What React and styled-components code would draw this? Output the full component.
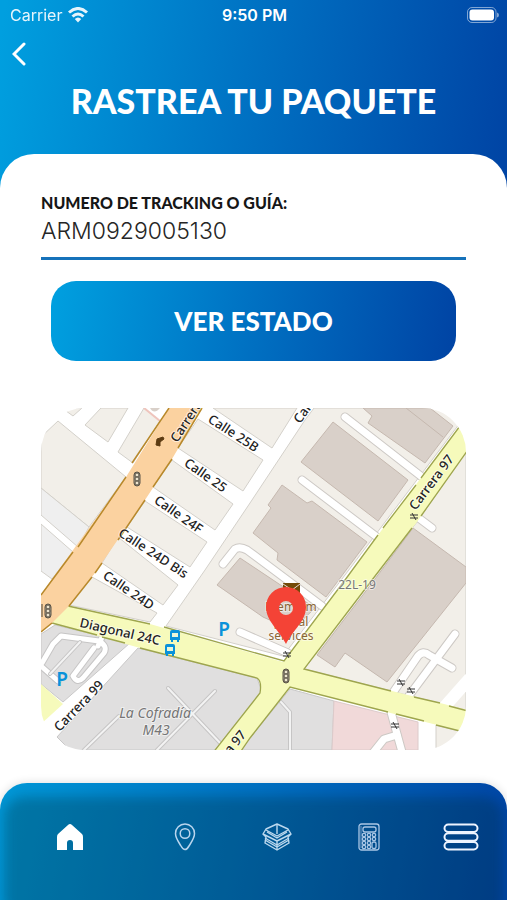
import React, { useState } from "react";
import styled, { createGlobalStyle } from "styled-components";

const GlobalStyle = createGlobalStyle`
  * { box-sizing: border-box; }
  body { margin: 0; background: #fff; font-family: Inter, "Liberation Sans", sans-serif; }
`;

const blueFade = "linear-gradient(98deg, #009fdf 1%, #0072c3 48%, #0045a5 98%)";
const displayFont = 'Lato, "Open Sans", sans-serif';

const Page = styled.div`
  min-height: 100vh;
  display: flex;
  flex-direction: column;
  background: #fff;
`;

const Header = styled.header`
  display: flex;
  flex-direction: column;
  height: 190px;
  background: ${blueFade};
  color: #fff;
`;

const StatusBar = styled.div`
  display: grid;
  grid-template-columns: 1fr auto 1fr;
  align-items: center;
  height: 30px;
  padding: 0 8px 0 10px;
  font-size: 16px;
  line-height: 20px;
`;

const Carrier = styled.div`
  display: flex;
  align-items: center;
  gap: 6px;
  opacity: 0.9;
`;

const Clock = styled.div`
  font-weight: 600;
`;

const BatteryIcon = styled.svg`
  justify-self: end;
`;

const BackButton = styled.button`
  display: flex;
  width: 32px;
  height: 48px;
  padding: 12px 0 0 12px;
  border: 0;
  background: none;
  color: inherit;
  cursor: pointer;
`;

const Title = styled.h1`
  margin: 0;
  text-align: center;
  font: 900 34px/46px ${displayFont};
`;

const Sheet = styled.main`
  flex: 1;
  margin-top: -36px;
  padding: 40px 41px 33px;
  border-radius: 34px 34px 0 0;
  background: #fff;
`;

const Form = styled.form`
  display: flex;
  flex-direction: column;
`;

const FieldLabel = styled.label`
  color: #161616;
  font: 900 16px/18px ${displayFont};
`;

const TrackingInput = styled.input`
  width: 100%;
  height: 48px;
  padding: 0 0 8px;
  border: 0;
  border-bottom: 3px solid #1672ba;
  border-radius: 0;
  background: none;
  color: #262626;
  font: 300 23px/28px Inter, sans-serif;
  outline: 0;
`;

const SubmitButton = styled.button`
  height: 80px;
  margin: 21px 10px 0;
  border: 0;
  border-radius: 25px;
  background: ${blueFade};
  color: #fff;
  font: 900 26px/36px ${displayFont};
  cursor: pointer;
`;

const MapCard = styled.section`
  margin-top: 47px;
  border-radius: 44px;
  overflow: hidden;
  aspect-ratio: 425 / 342;
`;

const MapDrawing = styled.svg`
  display: block;
  width: 100%;
  height: 100%;
  font-family: "Noto Sans", "Open Sans", sans-serif;
`;

const RoadLabel = styled.text`
  font-size: 13px;
  font-weight: 500;
  fill: #222;
  stroke: rgba(255, 255, 255, 0.6);
  stroke-width: 2px;
  paint-order: stroke;
  text-anchor: middle;
`;

const PlaceLabel = styled.text`
  font-size: ${(p) => (p.$large ? 14 : 12)}px;
  font-style: ${(p) => (p.$large ? "italic" : "normal")};
  fill: ${(p) => p.$color};
  stroke: rgba(255, 255, 255, 0.5);
  stroke-width: 2px;
  paint-order: stroke;
  text-anchor: middle;
`;

const ParkingLabel = styled.text`
  font-size: 19px;
  font-weight: 600;
  fill: #0a92da;
  text-anchor: middle;
`;

const NavBar = styled.nav`
  position: relative;
  display: grid;
  grid-template-columns: 139fr 92fr 92fr 92fr 92fr;
  align-items: start;
  height: 117px;
  padding-top: 34px;
  border-radius: 27px 27px 0 0;
  background: linear-gradient(100deg, #0096d6 2%, #006fc0 50%, #0045a5 98%);
  box-shadow: 0 0 10px rgba(0, 0, 0, 0.14);
  overflow: hidden;

  &::before {
    content: "";
    position: absolute;
    inset: 14px 4px -20px;
    border-radius: 20px;
    background: rgba(0, 40, 48, 0.29);
    filter: blur(6px);
  }
`;

const NavLink = styled.a`
  position: relative;
  display: grid;
  place-items: center;
  height: 40px;
  color: #fff;
`;

const paths = (shapes) => shapes.map((d) => <path key={d} d={d} />);

const landBlocks = [
  "M41 437 58 421 126 477 89 527 41 488Z",
  "M101 408 85 425 108 442 128 408Z",
  "M144 408 118 452 133 463 160 421Z",
  "M62 408 73 416 82 408Z",
  "M213 408 272 448 297 408Z",
  "M198 419 178 448 243 491 263 460Z",
  "M172 460 153 487 215 530 233 504Z",
  "M145 501 127 527 190 567 207 542Z",
  "M118 537 102 563 163 605 178 585Z",
  "M92 577 69 605 150 622 157 613Z",
  "M314 408 305 420 250 503 205 570 166 626 283 656 345 575 466 415 466 408Z",
  "M304 669 372 580 417 522 466 452 466 710Z",
  "M436 725 466 733 466 750 436 750Z",
];

const greyBlocks = [
  "M41 488 89 527 78 547 41 515Z",
  "M41 524 73 552 52 579 41 571Z",
];

const cityBlocks = [
  "M55 625 130 643 63 702 41 684 41 634Z",
  "M138 648 257 678 262 692 215 750 70 750 57 737Z",
  "M290 689 334 701 332 750 241 750 250 738Z",
];

const buildings = [
  "M333 422 408 480 378 521 301 462Z",
  "M282 485 307 503 312 501 367 542 326 597 277 560 278 553 253 533 271 508 268 505Z",
  "M240 558 217 585 263 617 292 630 315 608Z",
  "M363 408 372 416 368 423 425 463 453 426 430 408Z",
  "M413 528 466 567 466 583 387 682 345 653 335 667 317 655 372 583Z",
];

const lanes = [
  "M345 417 422 477",
  "M302 480 377 537",
  "M223 564 235 549 Q240 546 247 550 L322 606",
  "M240 632 288 653",
  "M416 516 432 528",
  "M455 634 408 697",
  "M392 694 418 656 Q423 650 429 655 L452 668",
  "M391 712 397 734 402 752",
  "M397 735 384 739 372 754",
];

const parkingLanes = [
  "M42 663 53 644 61 636 99 641 Q108 646 104 653 L83 678 Q77 684 73 676 L94 648",
  "M41 666 58 681",
  "M98 646 104 633",
];

const tracks = [
  "M50 674 80 642",
  "M168 688 223 746",
  "M215 691 157 750",
  "M119 716 84 750",
  "M281 702 290 712 290 750",
];

const barriers = [
  [414, 516],
  [287, 654],
  [401, 682],
  [411, 690],
  [395, 725],
];

const signals = [
  [137, 479],
  [48, 611],
  [286, 676],
];

const roadLabels = [
  ["Calle 25B", 231, 437, 33],
  ["Calle 25", 203, 479, 35],
  ["Calle 24F", 176, 518, 35],
  ["Calle 24D Bis", 151, 557, 33],
  ["Calle 24D", 126, 594, 34],
  ["Diagonal 24C", 119, 636, 13],
  ["Carrera 99", 82, 709, -46],
  ["Carrera 97", 435, 485, -53],
  ["Carrera 97", 226, 760, -50],
  ["Carrera 99", 195, 416, -57],
  ["Carrera 99", 319, 398, -54],
];

function TrafficSignal({ x, y }) {
  return (
    <g transform={`translate(${x} ${y})`} fill="none" stroke="#5a5346" strokeWidth="1">
      <rect x="-3" y="-7" width="6" height="14" rx="3" fill="#a9a18f" />
      <circle cy="-4" r="2" fill="#eee5cf" />
      <circle r="2" fill="#eee5cf" />
      <circle cy="4" r="2" fill="#eee5cf" />
    </g>
  );
}

function Bus({ x, y }) {
  return (
    <g transform={`translate(${x} ${y})`}>
      <path d="M-5 -4 Q-5 -6 -3 -6 H3 Q5 -6 5 -4 V4 H4 V6 H2 V4 H-2 V6 H-4 V4 H-5Z" fill="#0a92da" />
      <path d="M-3 -3 H3 V1 H-3Z" fill="#e9f6d9" />
    </g>
  );
}

function StreetMap() {
  return (
    <MapDrawing viewBox="41 408 425 342" preserveAspectRatio="xMidYMid slice" role="img" aria-label="Mapa">
      <rect x="41" y="408" width="425" height="342" fill="#fff" />
      <g fill="#f2efe9" stroke="#d3d0ca" strokeWidth="1">{paths(landBlocks)}</g>
      <g fill="#efefef" stroke="#d3d0ca" strokeWidth="1">{paths(greyBlocks)}</g>
      <g fill="#e0dfdf" stroke="#c9c8c8" strokeWidth="1">{paths(cityBlocks)}</g>
      <path d="M334 701 418 722 418 750 332 750Z" fill="#f1d9d9" stroke="#dccaca" />
      <path d="M41 684 63 704 41 724Z" fill="#f6fabb" />
      <path d="M144 408 160 421" stroke="#efc4bc" strokeWidth="2" />
      <path d="M150 408 Q154 415 160 408Z" fill="#d9d0c9" />
      <g fill="#d9d0c9" stroke="#c5b8af" strokeWidth="1">{paths(buildings)}</g>
      <path d="M406 408 443 437" stroke="#c5b8af" />
      <path d="M470 678 440 712" stroke="#fff" strokeWidth="12" />
      <g fill="none" strokeLinecap="round" strokeLinejoin="round">
        <g stroke="#cdc9c5" strokeWidth="9">{paths(lanes)}</g>
        <g stroke="#fff" strokeWidth="7">{paths(lanes)}</g>
        <g stroke="#c6c5c5" strokeWidth="7">{paths(parkingLanes)}</g>
        <g stroke="#fff" strokeWidth="5">{paths(parkingLanes)}</g>
        <g stroke="#c6c5c5" strokeWidth="4">{paths(tracks)}</g>
        <g stroke="#f3f3f3" strokeWidth="2">{paths(tracks)}</g>
      </g>
      <path
        d="M52 604 68 606 150 624 283 662 345 580 378 535 457 430 470 412 470 447 417 522 372 580 304 669 468 710 468 733 290 687 250 738 239 754 212 754 260 693 Q262 681 257 678 L140 648 52 623Z"
        fill="#f6fabb"
      />
      <g fill="none" stroke="#9ea54e" strokeWidth="1.3">
        <path d="M68 606 150 624 M164 627 284 661 345 580 378 535 M383 528 416 485 M421 478 457 430 470 412" />
        <path d="M470 447 421 516 M412 528 372 580 304 669 391 691 M414 697 440 703 M449 706 468 711" />
        <path d="M468 733 436 725 M424 721 396 714 M388 712 290 687 250 738 239 754 M212 754 260 693 Q262 681 257 678 L140 648 M125 643 102 637 M97 635 52 623" />
      </g>
      <path d="M169 408 126 477 52 579 41 595 41 632 52 623 69 606 95 573 145 500 172 459 202 408Z" fill="#fbd2a0" />
      <g fill="none" stroke="#b8892b" strokeWidth="1.5">
        <path d="M169 408 132 463 M126 477 78 547 M73 552 41 595 M41 632 52 623" />
        <path d="M202 408 178 448 M172 459 153 487 M145 500 118 540 M102 563 95 573 M92 577 69 606" />
      </g>
      <path d="M156 445 157 439 163 437 164 439 160 442 160 446Z" fill="#5c3b12" stroke="#5c3b12" />
      {roadLabels.map(([text, x, y, angle]) => (
        <RoadLabel key={`${text}-${x}`} transform={`translate(${x} ${y}) rotate(${angle})`}>{text}</RoadLabel>
      ))}
      {signals.map(([x, y]) => <TrafficSignal key={x} x={x} y={y} />)}
      <path d="M42 604V617" stroke="#4b4438" />
      <g stroke="#333" strokeWidth="1">
        {barriers.map(([x, y]) => (
          <path key={x} d={`M${x - 4} ${y - 1}h8M${x - 4} ${y + 2}h8M${x - 2} ${y - 3}l4 7`} />
        ))}
      </g>
      <Bus x={175} y={636} />
      <Bus x={170} y={650} />
      <ParkingLabel x="224" y="636">P</ParkingLabel>
      <ParkingLabel x="62" y="686">P</ParkingLabel>
      <PlaceLabel $large $color="#757575" x="155" y="718">La Cofradía</PlaceLabel>
      <PlaceLabel $large $color="#757575" x="156" y="735">M43</PlaceLabel>
      <PlaceLabel $color="#777" x="357" y="589">22L-19</PlaceLabel>
      <path d="M283 583H300V596H283Z" fill="#734a08" />
      <path d="M283 584 292 590 300 584" fill="none" stroke="#e6ddd5" />
      <PlaceLabel $color="#8a6536" x="291" y="611">Premium</PlaceLabel>
      <PlaceLabel $color="#8a6536" x="291" y="626">postal</PlaceLabel>
      <PlaceLabel $color="#8a6536" x="291" y="640">services</PlaceLabel>
      <path
        d="M286 644C279 630 266 621 266 607A20 20 0 0 1 306 607C306 621 293 630 286 644ZM286 601A7 7 0 1 0 286 615A7 7 0 1 0 286 601Z"
        fill="#f44336"
        fillRule="evenodd"
      />
    </MapDrawing>
  );
}

const HomeIcon = () => (
  <svg width="26" height="28" viewBox="0 0 26 28" fill="currentColor">
    <path d="M13 1Q14 1 15 2L25 11Q26 12 26 14V27H16V20Q16 17 13 17Q10 17 10 20V27H0V14Q0 12 1 11L11 2Q12 1 13 1Z" />
  </svg>
);

const PinIcon = () => (
  <svg width="22" height="28" viewBox="0 0 22 28" fill="none" stroke="#b8d5ee" strokeWidth="1.5">
    <path d="M11 26.5Q9 26.5 7 23C4 18 1.5 15 1.5 10.5A9.5 9.5 0 0 1 20.5 10.5C20.5 15 18 18 15 23Q13 26.5 11 26.5Z" />
    <circle cx="11" cy="10.5" r="4.8" />
  </svg>
);

const BoxIcon = () => (
  <svg width="30" height="28" viewBox="0 0 30 28" fill="none" stroke="#bbd8ee" strokeWidth="1.4" strokeLinejoin="round">
    <path d="M15 1 26 6 29 11 26 14 27 20 15 27 3 20 4 14 1 11 4 6Z" />
    <path d="M15 1V11M15 17V27M4 7 15 13 26 7M1 11 15 18 29 11M5 9 15 15 25 9M3 15 15 22 27 15M3 17 15 24 27 17" />
  </svg>
);

const CalculatorIcon = () => (
  <svg width="22" height="28" viewBox="0 0 22 28" fill="none" stroke="#a9c6e5" strokeWidth="1.3">
    <rect x="1" y="1" width="20" height="26" rx="2.5" />
    <path d="M3 3V25" strokeOpacity="0.5" />
    <rect x="5" y="4" width="13" height="5" rx="2" />
    {[12, 16, 20, 24].map((y) => [6, 11].map((x) => <circle key={`${x}-${y}`} cx={x} cy={y} r="1.7" />))}
    <circle cx="16" cy="12" r="1.7" />
    <circle cx="16" cy="16" r="1.7" />
    <rect x="14" y="19" width="4" height="6.5" rx="1.5" />
  </svg>
);

const MenuIcon = () => (
  <svg width="36" height="28" viewBox="0 0 36 28" fill="none" stroke="#eef4ff" strokeWidth="2">
    <rect x="1.5" y="1.5" width="33" height="7.5" rx="3.7" />
    <rect x="1.5" y="10.3" width="33" height="7.5" rx="3.7" />
    <rect x="1.5" y="19" width="33" height="7.5" rx="3.7" />
  </svg>
);

const navItems = [
  ["Inicio", HomeIcon],
  ["Rastreo", PinIcon],
  ["Paquetes", BoxIcon],
  ["Calculadora", CalculatorIcon],
  ["Menú", MenuIcon],
];

export default function App() {
  const [tracking, setTracking] = useState("ARM0929005130");
  return (
    <Page>
      <GlobalStyle />
      <Header>
        <StatusBar>
          <Carrier>
            Carrier
            <svg width="20" height="16" viewBox="0 0 20 16" fill="none" stroke="#fff" strokeWidth="3">
              <path d="M1 5.5Q10 -2.5 19 5.5M4.5 9.5Q10 4.500 15.5 9.5" />
              <path d="M6.800 12Q10 9 13.200 12L10 15.500Z" fill="#fff" stroke="none" />
            </svg>
          </Carrier>
          <Clock>9:50 PM</Clock>
          <BatteryIcon width="32" height="16" viewBox="0 0 32 16">
            <rect x="0.5" y="0.5" width="28.5" height="15" rx="4.5" fill="none" stroke="#fff" strokeOpacity="0.5" />
            <rect x="2.5" y="2.5" width="24.5" height="11" rx="3" fill="#fff" />
            <path d="M30 5.5Q32 6 32 8T30 10.5Z" fill="#fff" fillOpacity="0.5" />
          </BatteryIcon>
        </StatusBar>
        <BackButton type="button" aria-label="Volver">
          <svg width="14" height="24" viewBox="0 0 14 24" fill="none" stroke="currentColor" strokeWidth="3" strokeLinecap="round">
            <path d="M12 2 2 12 12 22" />
          </svg>
        </BackButton>
        <Title>RASTREA TU PAQUETE</Title>
      </Header>
      <Sheet>
        <Form onSubmit={(e) => e.preventDefault()}>
          <FieldLabel htmlFor="tracking">NUMERO DE TRACKING O GUÍA:</FieldLabel>
          <TrackingInput id="tracking" value={tracking} onChange={(e) => setTracking(e.target.value)} />
          <SubmitButton type="submit">VER ESTADO</SubmitButton>
        </Form>
        <MapCard>
          <StreetMap />
        </MapCard>
      </Sheet>
      <NavBar>
        {navItems.map(([label, Icon]) => (
          <NavLink key={label} href="#" aria-label={label}>
            <Icon />
          </NavLink>
        ))}
      </NavBar>
    </Page>
  );
}
